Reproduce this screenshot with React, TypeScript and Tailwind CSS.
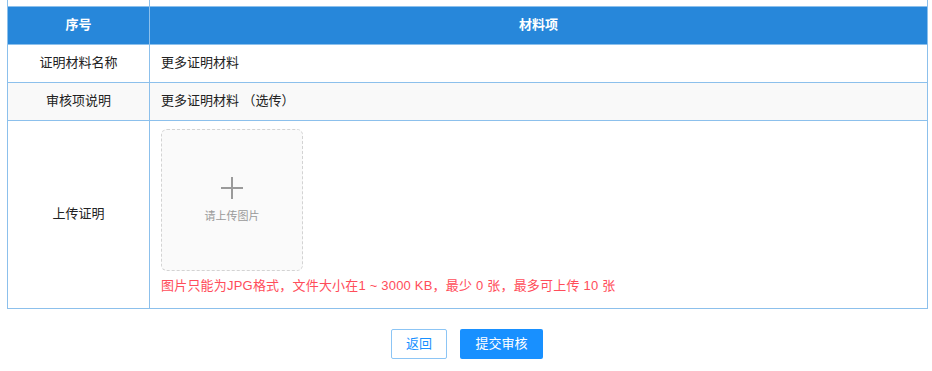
import React from 'react';

const font = { fontFamily: '"Liberation Sans", "Noto Sans CJK SC", sans-serif' };

export default function App() {
  return (
    <div className="w-[932px] h-[371px] bg-white overflow-hidden text-[13px] text-[#222]" style={font}>
      <table className="ml-[7px] w-[921px] table-fixed border-collapse">
        <colgroup>
          <col className="w-[142px]" />
          <col />
        </colgroup>
        <tbody>
          {/* cut-off row above */}
          <tr className="h-[6px]">
            <td className="border-x border-[#8cc0ec] p-0" />
            <td className="border-x border-[#8cc0ec] p-0" />
          </tr>
          <tr className="h-[38px] bg-[#2787da] text-white font-bold">
            <td className="border border-[#8cc0ec] text-center p-0">序号</td>
            <td className="border border-[#8cc0ec] text-center p-0">材料项</td>
          </tr>
          <tr className="h-[38px] bg-white">
            <td className="border border-[#8cc0ec] text-center p-0">证明材料名称</td>
            <td className="border border-[#8cc0ec] pl-[11px] py-0">更多证明材料</td>
          </tr>
          <tr className="h-[38px] bg-[#f9f9f9]">
            <td className="border border-[#8cc0ec] text-center p-0">审核项说明</td>
            <td className="border border-[#8cc0ec] pl-[11px] py-0">更多证明材料 （选传）</td>
          </tr>
          <tr className="bg-white">
            <td className="border border-[#8cc0ec] text-center p-0">上传证明</td>
            <td className="border border-[#8cc0ec] pl-[11px] pt-[8px] pb-[12px]">
              <div className="w-[142px] h-[142px] rounded-[6px] border border-dashed border-[#d3d3d3] bg-[#fafafa] flex flex-col items-center justify-center">
                <svg width="24" height="24" viewBox="0 0 24 24" className="mt-[2px]">
                  <path d="M12 1v22M1 12h22" stroke="#9a9a9a" strokeWidth="2" fill="none" />
                </svg>
                <div className="mt-[8px] text-[11px] text-[#999]">请上传图片</div>
              </div>
              <div className="mt-[5px] leading-[20px] tracking-[0.2px] text-[#ff4d5a]">
                图片只能为JPG格式，文件大小在1 ~ 3000 KB，最少 0 张，最多可上传 10 张
              </div>
            </td>
          </tr>
        </tbody>
      </table>
      <div className="flex justify-center gap-[13px] mt-[20px] pl-[2px]">
        <button className="w-[56px] h-[30px] rounded-[2px] border border-[#8cc5f5] bg-white text-[#1890ff] text-[13px]">
          返回
        </button>
        <button className="w-[83px] h-[30px] rounded-[2px] bg-[#1890ff] text-white text-[13px]">
          提交审核
        </button>
      </div>
    </div>
  );
}
